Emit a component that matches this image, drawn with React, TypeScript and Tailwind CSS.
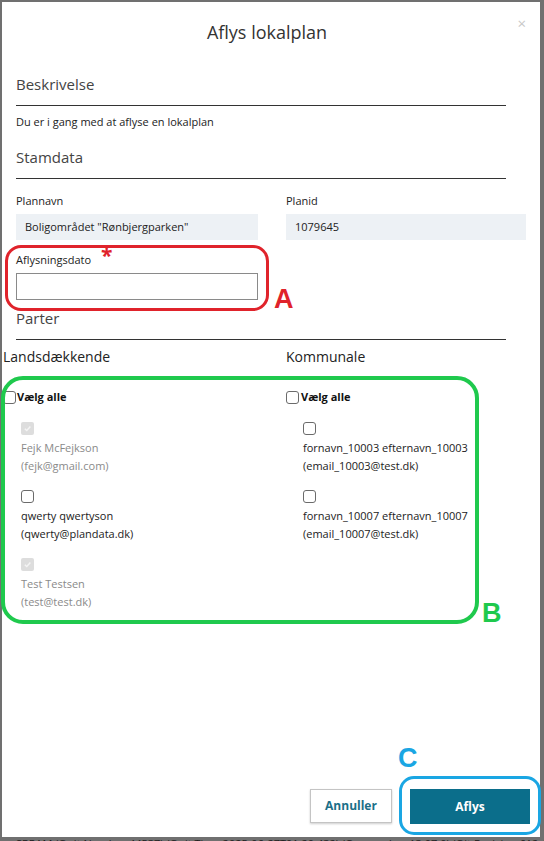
import React from 'react';

interface Party {
  name: string;
  email: string;
  locked?: boolean;
}

const national: Party[] = [
  { name: 'Fejk McFejkson', email: 'fejk@gmail.com', locked: true },
  { name: 'qwerty qwertyson', email: 'qwerty@plandata.dk' },
  { name: 'Test Testsen', email: 'test@test.dk', locked: true },
];

const municipal: Party[] = [
  { name: 'fornavn_10003 efternavn_10003', email: 'email_10003@test.dk' },
  { name: 'fornavn_10007 efternavn_10007', email: 'email_10007@test.dk' },
];

const Checkbox: React.FC<{ locked?: boolean }> = ({ locked }) =>
  locked ? (
    <span className="flex h-[13px] w-[13px] items-center justify-center rounded-[2px] bg-[#dddddd]">
      <svg width="9" height="9" viewBox="0 0 10 10" fill="none">
        <path d="M2 5.2 4.2 7.3 8.2 2.8" stroke="#f4f4f4" strokeWidth="1.6" />
      </svg>
    </span>
  ) : (
    <span className="block h-[13px] w-[13px] shrink-0 rounded-[3px] border border-[#6b6b6b] bg-white" />
  );

const PartyList: React.FC<{ parties: Party[]; indent: string }> = ({ parties, indent }) => (
  <div className={`mt-[17px] flex flex-col gap-[15px] ${indent}`}>
    {parties.map((p) => (
      <div key={p.email} className={p.locked ? 'text-[#8a8a8a]' : 'text-[#222]'}>
        <Checkbox locked={p.locked} />
        <div className="mt-[4px] text-[11px] leading-[18px]">{p.name}</div>
        <div className="text-[11px] leading-[18px]">({p.email})</div>
      </div>
    ))}
  </div>
);

const SectionTitle: React.FC<{ children: React.ReactNode; className?: string }> = ({ children, className }) => (
  <div className={`mr-[34px] border-b border-[#333] pb-[11px] text-[15px] leading-[20px] text-[#444] ${className ?? ''}`}>
    {children}
  </div>
);

export default function App() {
  return (
    <div
      className="relative h-[841px] w-[544px] overflow-hidden bg-[#707070]"
      style={{ fontFamily: '"Open Sans", "Noto Sans", sans-serif' }}
    >
      <div className="ml-[2px] mt-[2px] flex h-[835px] w-[538px] flex-col bg-white">
        {/* header */}
        <div className="relative pt-[17px] text-center text-[18px] leading-[26px] text-[#333]">
          <span className="-ml-[8px]">Aflys lokalplan</span>
          <span className="absolute right-[14px] top-[12px] text-[15px] leading-[18px] text-[#c8c8c8]">×</span>
        </div>

        <div className="flex-1 pl-[14px]">
          <SectionTitle className="mt-[29px]">Beskrivelse</SectionTitle>
          <div className="mt-[8px] text-[11px] leading-[16px] text-[#222]">Du er i gang med at aflyse en lokalplan</div>

          <SectionTitle className="mt-[17px]">Stamdata</SectionTitle>
          <div className="mt-[14px] grid grid-cols-[242px_240px] gap-x-[28px] text-[11px] text-[#222]">
            <div>
              <div className="leading-[16px]">Plannavn</div>
              <div className="mt-[5px] flex h-[26px] items-center bg-[#edf1f5] pl-[9px]">Boligområdet "Rønbjergparken"</div>
            </div>
            <div>
              <div className="leading-[16px]">Planid</div>
              <div className="mt-[5px] flex h-[26px] items-center bg-[#edf1f5] pl-[9px]">1079645</div>
            </div>
          </div>

          <div className="mt-[12px] text-[11px] leading-[16px] text-[#222]">Aflysningsdato</div>
          <div className="mt-[5px] h-[27px] w-[242px] border border-[#8a8a8a] bg-white" />

          <SectionTitle className="mt-[8px]">Parter</SectionTitle>

          <div className="-ml-[13px] mt-[7px] grid grid-cols-[283px_1fr]">
            <div>
              <div className="text-[14px] leading-[20px] text-[#222]">Landsdækkende</div>
              <div className="mt-[22px] flex items-center gap-[1px] text-[11px] font-bold leading-[16px] text-[#111]">
                <Checkbox />
                <span>Vælg alle</span>
              </div>
              <PartyList parties={national} indent="pl-[18px]" />
            </div>
            <div>
              <div className="text-[14px] leading-[20px] text-[#222]">Kommunale</div>
              <div className="mt-[22px] flex items-center gap-[2px] text-[11px] font-bold leading-[16px] text-[#111]">
                <Checkbox />
                <span>Vælg alle</span>
              </div>
              <PartyList parties={municipal} indent="pl-[17px]" />
            </div>
          </div>
        </div>

        {/* footer */}
        <div className="flex justify-end gap-[18px] pb-[13px] pr-[10px]">
          <button className="h-[34px] w-[82px] border border-[#c4c4c4] bg-white text-[12px] font-bold text-[#1b6f88] shadow-[0_1px_2px_rgba(0,0,0,0.2)]">
            Annuller
          </button>
          <button className="h-[35px] w-[120px] bg-[#0b6e8b] text-[12px] font-bold text-white">Aflys</button>
        </div>
      </div>

      {/* page behind the dialog */}
      <div className="whitespace-nowrap pl-[16px] text-[11px] leading-[14px] text-[#1e1e1e]">
        SRRAM (Quit Number 44537) (Quit Time 2025-06-27T01:20:432) (Q... number 13.07.0) (Qit Revision 612_24)
      </div>

      {/* markers */}
      <span className="absolute left-[101px] top-[245px] text-[21px] font-bold leading-[20px] text-[#e0232b]">*</span>
      <div className="absolute left-[5px] top-[245px] h-[66px] w-[264px] rounded-[16px] border-[3px] border-[#e0232b]" />
      <span className="absolute left-[274px] top-[284px] text-[27px] font-bold leading-[30px] text-[#e0232b]" style={{ fontFamily: '"Liberation Sans", sans-serif' }}>A</span>

      <div className="absolute left-[1px] top-[376px] h-[248px] w-[478px] rounded-[22px] border-[4px] border-[#1fc94d]" />
      <span className="absolute left-[482px] top-[598px] text-[27px] font-bold leading-[30px] text-[#1fc94d]" style={{ fontFamily: '"Liberation Sans", sans-serif' }}>B</span>

      <div className="absolute left-[399px] top-[776px] h-[59px] w-[142px] rounded-[15px] border-[3px] border-[#1aa6e3]" />
      <span className="absolute left-[398px] top-[743px] text-[27px] font-bold leading-[30px] text-[#1aa6e3]" style={{ fontFamily: '"Liberation Sans", sans-serif' }}>C</span>
    </div>
  );
}
